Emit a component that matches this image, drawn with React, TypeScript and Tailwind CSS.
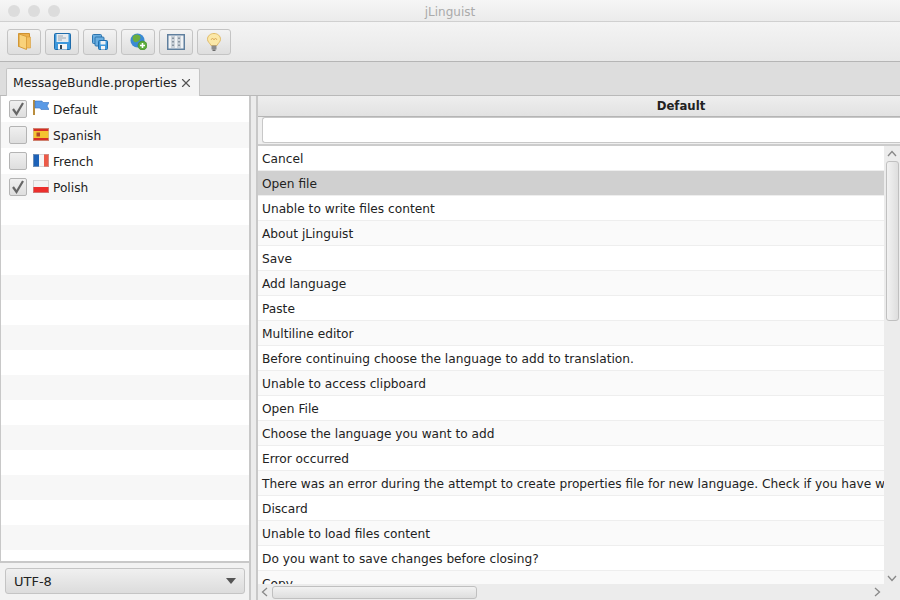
import { X } from 'lucide-react'

const langs = [
  { name: 'Default', checked: true, flag: 'default' },
  { name: 'Spanish', checked: false, flag: 'es' },
  { name: 'French', checked: false, flag: 'fr' },
  { name: 'Polish', checked: true, flag: 'pl' },
]

const messages = [
  'Cancel',
  'Open file',
  'Unable to write files content',
  'About jLinguist',
  'Save',
  'Add language',
  'Paste',
  'Multiline editor',
  'Before continuing choose the language to add to translation.',
  'Unable to access clipboard',
  'Open File',
  'Choose the language you want to add',
  'Error occurred',
  'There was an error during the attempt to create properties file for new language. Check if you have write permissions',
  'Discard',
  'Unable to load files content',
  'Do you want to save changes before closing?',
  'Copy',
]

function Flag({ code }: { code: string }) {
  if (code === 'default') {
    return (
      <svg width="16" height="15" viewBox="0 0 16 15" className="-mt-[3px]">
        <rect x="0" y="0" width="2" height="15" fill="#b98d3e" />
        <path d="M2 1 H9 L10 2.5 H16 L14 6 L16 9.5 H8 L7 8 H2 Z" fill="#5a9ae6" stroke="#3b74c0" strokeWidth="0.6" />
      </svg>
    )
  }
  if (code === 'es') {
    return (
      <svg width="16" height="13" viewBox="0 0 16 13" className="-mt-[2px]">
        <rect width="16" height="13" fill="#d62e26" />
        <rect y="3" width="16" height="7" fill="#f4c430" />
        <rect x="3.5" y="4.5" width="3.5" height="4" fill="#b0482a" />
        <rect x="0.5" y="0.5" width="15" height="12" fill="none" stroke="#c9b9a0" strokeOpacity="0.6" />
      </svg>
    )
  }
  if (code === 'fr') {
    return (
      <svg width="16" height="13" viewBox="0 0 16 13" className="-mt-[2px]">
        <rect width="6" height="13" fill="#1d62b8" />
        <rect x="6" width="5" height="13" fill="#f5f5f5" />
        <rect x="11" width="5" height="13" fill="#ec5a48" />
        <rect x="0.5" y="0.5" width="15" height="12" fill="none" stroke="#b8b8b8" strokeOpacity="0.5" />
      </svg>
    )
  }
  return (
    <svg width="16" height="13" viewBox="0 0 16 13" className="-mt-[2px]">
      <rect width="16" height="7" fill="#f3f3f3" />
      <rect y="7" width="16" height="6" fill="#ec2f2c" />
      <rect x="0.5" y="0.5" width="15" height="12" fill="none" stroke="#b8b8b8" strokeOpacity="0.5" />
    </svg>
  )
}

function ToolButton({ children }: { children: React.ReactNode }) {
  return (
    <button className="flex h-[26px] w-[34px] items-center justify-center rounded-[3px] border border-[#c4c4c4] bg-gradient-to-b from-[#f3f3f3] to-[#dedede]">
      {children}
    </button>
  )
}

export default function App() {
  return (
    <div className="flex h-[600px] w-[900px] flex-col overflow-hidden bg-white font-['DejaVu_Sans',sans-serif] text-[12.2px] text-[#222222]">
      <div className="flex h-[22px] shrink-0 items-center border-b border-[#d0d0d0] bg-gradient-to-b from-[#f6f6f6] to-[#ebebeb] pl-2">
        <div className="flex gap-2">
          <span className="h-3 w-3 rounded-full bg-[#dcdcdc]" />
          <span className="h-3 w-3 rounded-full bg-[#dcdcdc]" />
          <span className="h-3 w-3 rounded-full bg-[#dcdcdc]" />
        </div>
        <div className="flex-1 pr-[60px] pt-[2px] text-center text-[12px] text-[#aaaaaa]">jLinguist</div>
      </div>

      <div className="flex h-[40px] shrink-0 items-center gap-[4px] border-b border-[#b5b5b5] bg-gradient-to-b from-[#f4f4f4] to-[#e8e8e8] pl-[7px]">
        <ToolButton>
          <svg width="13" height="17" viewBox="0 0 13 17">
            <path d="M0.5 0.5 H11.5 V13.5 H0.5 Z" fill="#eeb04a" stroke="#cf9230" />
            <path d="M1 1 L8.5 3.5 V16.5 L1 13.5 Z" fill="#f9d27a" stroke="#d69c3a" />
            <path d="M8.5 4 H12.5 V15 H8.5 Z" fill="#f3bf5e" stroke="#d69c3a" strokeWidth="0.6" />
          </svg>
        </ToolButton>
        <ToolButton>
          <svg width="17" height="17" viewBox="0 0 17 17">
            <rect x="0.5" y="0.5" width="16" height="16" rx="1" fill="#3d98dc" stroke="#1f6cab" />
            <rect x="2.5" y="1" width="12" height="8" fill="#e6ebef" />
            <path d="M4 3 H9 M4 5 H12 M4 7 H8" stroke="#8a98a4" strokeWidth="0.8" />
            <rect x="4" y="11" width="9" height="5.5" fill="#f4f4f4" />
            <rect x="6" y="12" width="2" height="4" fill="#34404a" />
          </svg>
        </ToolButton>
        <ToolButton>
          <svg width="16" height="16" viewBox="0 0 16 16">
            <rect x="0.5" y="0.5" width="9" height="9" rx="1" fill="#6aaee0" stroke="#2d74ae" />
            <rect x="3" y="3" width="9" height="9" rx="1" fill="#6aaee0" stroke="#2d74ae" />
            <rect x="6.5" y="6.5" width="9" height="9" rx="1" fill="#3d98dc" stroke="#1f6cab" />
            <rect x="8.5" y="7" width="5" height="3.5" fill="#eef1f4" />
            <rect x="9" y="12" width="4" height="3.5" fill="#f4f4f4" />
          </svg>
        </ToolButton>
        <ToolButton>
          <svg width="17" height="17" viewBox="0 0 17 17">
            <circle cx="7.5" cy="7.5" r="7" fill="#3a8ad4" />
            <path d="M3 3 C6 0.5 10 1.5 10.5 4 C10.5 7 7.5 10 4.5 9 C3 8 2 5 3 3 Z" fill="#6cae3e" />
            <circle cx="12.5" cy="12.5" r="4.5" fill="#5cad3a" stroke="#3a8426" strokeWidth="0.6" />
            <path d="M12.5 10 V15 M10 12.5 H15" stroke="#ffffff" strokeWidth="1.6" />
          </svg>
        </ToolButton>
        <ToolButton>
          <svg width="18" height="16" viewBox="0 0 18 16">
            <rect x="0.75" y="0.75" width="16.5" height="14.5" fill="#f0f2f4" stroke="#5f7f9e" strokeWidth="1.5" />
            <rect x="4" y="2" width="4" height="12" fill="#ccd3da" />
            <rect x="10" y="2" width="4" height="12" fill="#ccd3da" />
            <path d="M6 3.5 V12.5 M12 3.5 V12.5" stroke="#485868" strokeDasharray="1.5 2" />
          </svg>
        </ToolButton>
        <ToolButton>
          <svg width="14" height="18" viewBox="0 0 14 18">
            <path d="M7 0.5 C3.2 0.5 0.5 3 0.5 6.3 C0.5 9 3 10 4 12.5 H10 C11 10 13.5 9 13.5 6.3 C13.5 3 10.8 0.5 7 0.5 Z" fill="#fbe8a8" stroke="#e0bb68" />
            <path d="M4 7 L5.5 5 L7 7 L8.5 5 L10 7" fill="none" stroke="#d49c48" strokeWidth="0.7" />
            <rect x="4.5" y="12.5" width="5" height="4" fill="#8c8c8c" />
            <rect x="5.5" y="16.5" width="3" height="1.5" fill="#6c6c6c" />
          </svg>
        </ToolButton>
      </div>

      <div className="flex h-[34px] shrink-0 items-end border-b border-[#b9b9b9] bg-[#dddddd] pl-[6px]">
        <div className="-mb-px flex h-[28px] w-[194px] items-center justify-between rounded-t-[2px] border border-b-0 border-[#c4c4c4] bg-[#f4f4f4] pl-[6px] pr-[6px] pt-px">
          <span className="text-[12.35px]">MessageBundle.properties</span>
          <X size={14} strokeWidth={2} className="text-[#555555]" />
        </div>
      </div>

      <div className="flex min-h-0 flex-1">
        <div className="flex w-[251px] shrink-0 flex-col border-r-2 border-[#c8c8c8]">
          <div className="min-h-0 flex-1 overflow-hidden border-b-2 border-l border-[#c8c8c8]">
            {langs.map((l, i) => (
              <div key={l.name} className={`flex h-[26px] items-center pl-[8px] ${i % 2 ? 'bg-[#f7f7f7]' : 'bg-white'}`}>
                <span className="flex h-[18px] w-[18px] items-center justify-center rounded-[2px] border border-[#b4b4b4] bg-gradient-to-b from-[#f0f0f0] to-[#dedede]">
                  {l.checked && (
                    <svg width="16" height="16" viewBox="0 0 16 16">
                      <path d="M3 8 L6.5 13 L13 2" fill="none" stroke="#666666" strokeWidth="2.2" />
                    </svg>
                  )}
                </span>
                <span className="ml-[6px] flex h-[13px] w-[16px] items-center"><Flag code={l.flag} /></span>
                <span className="ml-[4px] pt-[3px]">{l.name}</span>
              </div>
            ))}
            {Array.from({ length: 15 }).map((_, i) => (
              <div key={i} className={`h-[25px] ${i % 2 ? 'bg-[#f7f7f7]' : 'bg-white'}`} />
            ))}
          </div>
          <div className="h-[37px] shrink-0 bg-[#f2f2f2] pl-[5px] pr-[4px] pt-[5px]">
            <div className="flex h-[26px] w-full items-center justify-between rounded-[3px] border border-[#c4c4c4] bg-gradient-to-b from-[#f0f0f0] to-[#dcdcdc] pl-[8px] pr-[8px] text-[13px]">
              <span className="pt-[2px]">UTF-8</span>
              <span className="h-0 w-0 border-x-[5px] border-t-[6px] border-x-transparent border-t-[#555555]" />
            </div>
          </div>
        </div>

        <div className="w-[5px] shrink-0 bg-[#ececec]" />

        <div className="flex min-w-0 flex-1 flex-col border-l-2 border-[#c8c8c8]">
          <div className="h-[21px] shrink-0 overflow-hidden border-b border-[#b5b5b5] bg-gradient-to-b from-[#eeeeee] to-[#e2e2e2]">
            <div className="flex h-full w-[846px] items-center justify-center pt-[2px] text-[11.7px] font-bold">Default</div>
          </div>
          <div className="h-[29px] shrink-0 border-b-2 border-[#cccccc] bg-[#efefef] pl-[4px]">
            <div className="h-[26px] rounded-l-[3px] border border-r-0 border-[#c8c8c8] bg-white" />
          </div>
          <div className="flex min-h-0 flex-1">
            <div className="flex min-w-0 flex-1 flex-col">
              <div className="min-h-0 flex-1 overflow-hidden">
                {messages.map((m, i) => (
                  <div
                    key={m}
                    className={`flex h-[25px] items-center overflow-hidden whitespace-nowrap border-b border-[#eeeeee] pl-[4px] pt-[3px] ${
                      i === 1 ? 'bg-[#d0d0d0]' : i % 2 ? 'bg-[#fafafa]' : 'bg-white'
                    }`}
                  >
                    {m}
                  </div>
                ))}
              </div>
              <div className="flex h-[16px] shrink-0 items-center bg-[#ececec]">
                <span className="w-[14px] pl-[3px]">
                  <svg width="7" height="10" viewBox="0 0 7 10"><path d="M6 1 L1.5 5 L6 9" fill="none" stroke="#888888" strokeWidth="1.3" /></svg>
                </span>
                <div className="h-[13px] w-[205px] rounded-[3px] border border-[#c0c0c0] bg-gradient-to-b from-[#f2f2f2] to-[#dedede]" />
                <span className="ml-auto pr-[3px]">
                  <svg width="7" height="10" viewBox="0 0 7 10"><path d="M1 1 L5.5 5 L1 9" fill="none" stroke="#888888" strokeWidth="1.3" /></svg>
                </span>
              </div>
            </div>
            <div className="flex w-[16px] shrink-0 flex-col items-center bg-[#ececec]">
              <svg className="mt-[4px] mb-[4px]" width="10" height="7" viewBox="0 0 10 7"><path d="M1 6 L5 1.5 L9 6" fill="none" stroke="#888888" strokeWidth="1.3" /></svg>
              <div className="h-[160px] w-[13px] rounded-[3px] border border-[#c0c0c0] bg-gradient-to-r from-[#f2f2f2] to-[#dedede]" />
              <svg className="mt-auto mb-[18px]" width="10" height="7" viewBox="0 0 10 7"><path d="M1 1 L5 5.5 L9 1" fill="none" stroke="#888888" strokeWidth="1.3" /></svg>
            </div>
          </div>
        </div>
      </div>
    </div>
  )
}
